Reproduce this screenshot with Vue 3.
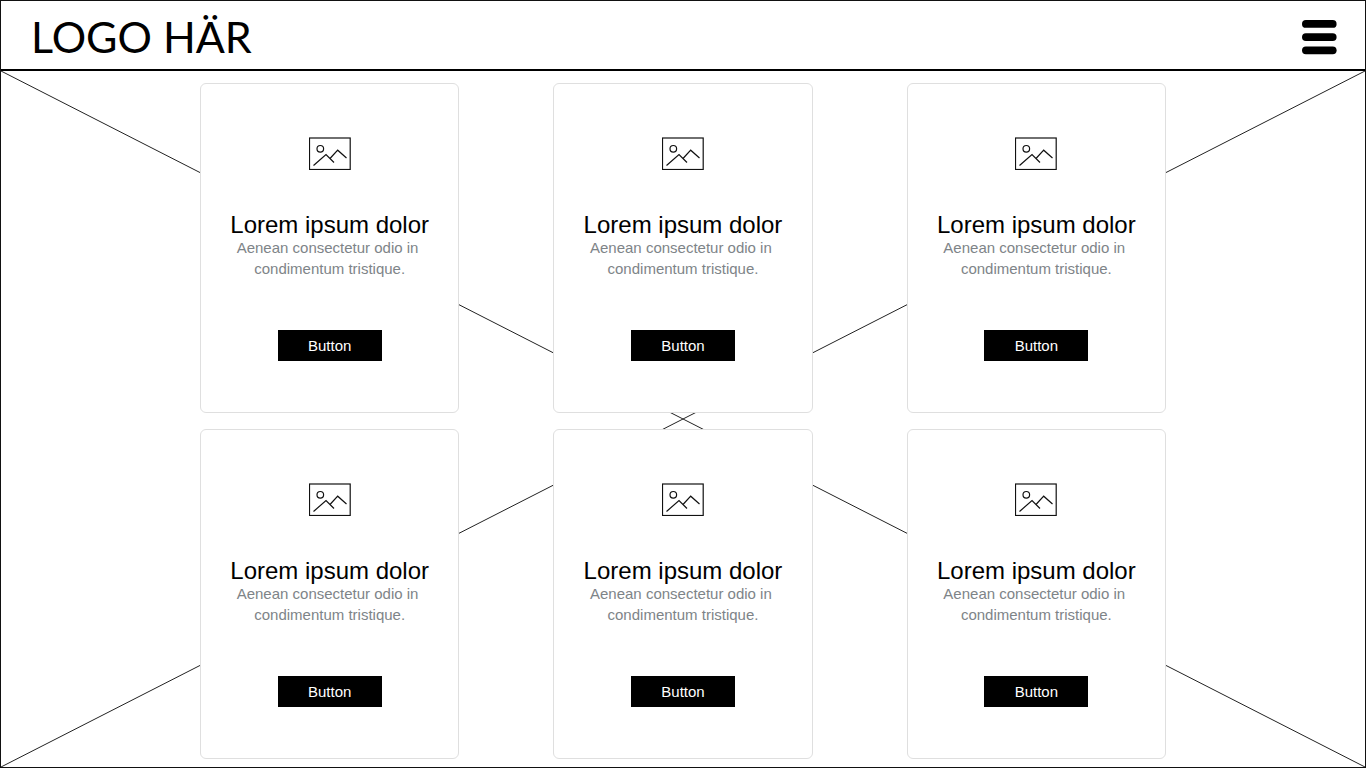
<script setup>
const cards = Array.from({ length: 6 }, (_, i) => ({
  id: i + 1,
  title: 'Lorem ipsum dolor',
  lines: ['Aenean consectetur odio in\u00a0', 'condimentum tristique.'],
  action: 'Button',
}))
</script>

<template>
  <div class="page">
    <header class="header">
      <a class="logo" href="#">LOGO HÄR</a>
      <button class="menu" type="button" aria-label="Menu">
        <svg width="35" height="36" viewBox="0 0 35 36" aria-hidden="true">
          <rect x="0" y="1" width="34.6" height="7.8" rx="3.9" />
          <rect x="0" y="14.2" width="34.6" height="7.8" rx="3.9" />
          <rect x="0" y="27.4" width="34.6" height="7.8" rx="3.9" />
        </svg>
      </button>
    </header>
    <main class="hero">
      <svg class="cross" viewBox="0 0 100 100" preserveAspectRatio="none" aria-hidden="true">
        <path d="M0 0L100 100M100 0L0 100" />
      </svg>
      <div class="grid">
        <article v-for="card in cards" :key="card.id" class="card">
          <svg class="picture" width="42" height="33" viewBox="0 0 42 33" aria-hidden="true">
            <rect x="0.5" y="1" width="40.7" height="31.5" />
            <circle cx="11.3" cy="11.8" r="3.3" />
            <path d="M4.5 28.5L17 17.5L25 25.5M21 21.5L28.7 13.2L37.5 21" />
          </svg>
          <h2 class="title">{{ card.title }}</h2>
          <p class="text"><span v-for="line in card.lines" :key="line">{{ line }}</span></p>
          <button class="action" type="button">{{ card.action }}</button>
        </article>
      </div>
    </main>
  </div>
</template>

<style>
body {
  margin: 0;
  background: #fff;
}
</style>

<style scoped>
.page {
  box-sizing: border-box;
  min-height: 100vh;
  display: flex;
  flex-direction: column;
  border: 1px solid #111;
  font-family: "Liberation Sans", Arial, sans-serif;
}

.header {
  display: flex;
  align-items: center;
  justify-content: space-between;
  padding: 4px 28px 0 30px;
  height: 64px;
  border-bottom: 2px solid #000;
}

.logo {
  color: #000;
  font-family: Lato, sans-serif;
  font-size: 43px;
  line-height: 52px;
  text-decoration: none;
  white-space: nowrap;
}

.menu {
  display: flex;
  padding: 0;
  border: 0;
  background: none;
  cursor: pointer;
}

.hero {
  position: relative;
  flex: 1;
  padding: 12px 16px 8px;
}

.cross {
  position: absolute;
  inset: 0;
  width: 100%;
  height: 100%;
}

.cross path {
  fill: none;
  stroke: #222;
  stroke-width: 1;
  vector-effect: non-scaling-stroke;
}

.grid {
  position: relative;
  display: grid;
  grid-template-columns: repeat(3, 1fr);
  gap: 16px 94px;
  max-width: 966px;
  margin: 0 auto;
}

.card {
  display: flex;
  flex-direction: column;
  align-items: center;
  padding: 53px 16px 51px;
  border: 1px solid #dfdfdf;
  border-radius: 6px;
  background: #fff;
}

.picture {
  fill: none;
  stroke: #111;
  stroke-width: 1.2;
}

.title {
  margin: 42px 0 0;
  color: #000;
  font-size: 24px;
  font-weight: 400;
  line-height: 25px;
  white-space: nowrap;
}

.text {
  margin: 0;
  color: #7e8488;
  font-size: 15px;
  line-height: 21px;
  text-align: center;
  white-space: nowrap;
}

.text span {
  display: block;
}

.action {
  margin-top: 51px;
  width: 104px;
  height: 31px;
  padding: 0;
  border: 0;
  background: #000;
  color: #fff;
  font-family: inherit;
  font-size: 15px;
  cursor: pointer;
}
</style>
